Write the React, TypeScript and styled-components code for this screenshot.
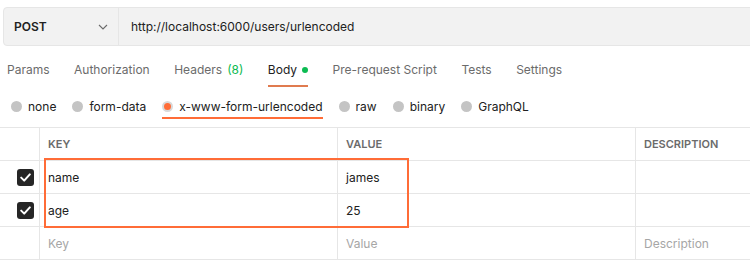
import styled, { createGlobalStyle } from 'styled-components';

const GlobalStyle = createGlobalStyle`
	body {
		margin: 0;
		background: #ffffff;
		font-family: Inter, 'Noto Sans', sans-serif;
		overflow: hidden;
	}
`;

interface Param {
	key: string;
	value: string;
}

const tabs = ['Params', 'Authorization', 'Headers', 'Body', 'Pre-request Script', 'Tests', 'Settings'];
const bodyTypes = ['none', 'form-data', 'x-www-form-urlencoded', 'raw', 'binary', 'GraphQL'];
const params: Param[] = [
	{ key: 'name', value: 'james' },
	{ key: 'age', value: '25' },
];

const Chevron = () => (
	<svg width='10' height='6' viewBox='0 0 10 6' fill='none'>
		<path d='M1 1l4 4 4-4' stroke='#6b6b6b' strokeWidth='1.1' />
	</svg>
);

const Check = () => (
	<svg width='11' height='9' viewBox='0 0 11 9' fill='none'>
		<path d='M1.2 4.6l3 3L9.8 1.4' stroke='#ffffff' strokeWidth='2' strokeLinecap='round' strokeLinejoin='round' />
	</svg>
);

const App: React.FC = () => {
	return (
		<>
			<GlobalStyle />
			<Page>
				<UrlBar>
					<MethodBox>
						<Method>POST</Method>
						<Chevron />
					</MethodBox>
					<UrlText>http://localhost:6000/users/urlencoded</UrlText>
				</UrlBar>

				<TabRow>
					{tabs.map(t => (
						<Tab key={t} active={t === 'Body'}>
							{t}
							{t === 'Headers' && <Count>(8)</Count>}
							{t === 'Body' && <Dot />}
						</Tab>
					))}
				</TabRow>

				<RadioRow>
					{bodyTypes.map(b => (
						<RadioItem key={b} selected={b === 'x-www-form-urlencoded'}>
							<Radio selected={b === 'x-www-form-urlencoded'} />
							{b}
						</RadioItem>
					))}
				</RadioRow>

				<Table>
					<HeadRow>
						<CheckCell />
						<HeadCell>KEY</HeadCell>
						<HeadCell>VALUE</HeadCell>
						<HeadCell last>DESCRIPTION</HeadCell>
					</HeadRow>
					<Highlighted>
						{params.map(p => (
							<Row key={p.key}>
								<CheckCell>
									<CheckBox>
										<Check />
									</CheckBox>
								</CheckCell>
								<Cell>{p.key}</Cell>
								<Cell>{p.value}</Cell>
								<Cell last />
							</Row>
						))}
						<Outline />
					</Highlighted>
					<Row>
						<CheckCell />
						<Cell placeholder>Key</Cell>
						<Cell placeholder>Value</Cell>
						<Cell placeholder last>
							Description
						</Cell>
					</Row>
				</Table>
			</Page>
		</>
	);
};

//Styled Component
const Page = styled.div`
	width: 750px;
	height: 264px;
	overflow: hidden;
`;

const UrlBar = styled.div`
	display: flex;
	height: 37px;
	margin: 7px 0 0 3px;
	width: 760px;
	background: #f2f2f2;
	border: 1px solid #e6e6e6;
	border-radius: 4px;
`;

const MethodBox = styled.div`
	width: 115px;
	box-sizing: border-box;
	display: flex;
	align-items: center;
	justify-content: space-between;
	padding: 0 10px 0 10px;
	border-right: 1px solid #e6e6e6;
	svg {
		margin-top: 1px;
	}
`;

const Method = styled.span`
	font-size: 12px;
	font-weight: 600;
	color: #212121;
`;

const UrlText = styled.div`
	display: flex;
	align-items: center;
	padding-left: 12px;
	font-size: 12px;
	color: #212121;
`;

const TabRow = styled.div`
	display: flex;
	gap: 24.5px;
	padding: 0 0 0 7px;
	height: 41px;
`;

const Tab = styled.div<{ active?: boolean }>`
	display: flex;
	align-items: center;
	padding-top: 8px;
	font-size: 12px;
	color: ${p => (p.active ? '#212121' : '#6b6b6b')};
	border-bottom: 2px solid ${p => (p.active ? '#e07b4f' : 'transparent')};
	box-sizing: border-box;
	height: 41px;
`;

const Count = styled.span`
	color: #0cbb52;
	margin-left: 5px;
`;

const Dot = styled.span`
	width: 6px;
	height: 6px;
	border-radius: 50%;
	background: #0cbb52;
	margin-left: 5px;
	margin-top: 1px;
`;

const RadioRow = styled.div`
	display: flex;
	gap: 16px;
	padding-left: 11px;
	height: 40px;
`;

const RadioItem = styled.div<{ selected?: boolean }>`
	display: flex;
	align-items: center;
	gap: 6px;
	height: 32px;
	padding-top: 8px;
	box-sizing: border-box;
	font-size: 12px;
	color: #212121;
	border-bottom: 2px solid ${p => (p.selected ? '#ff6c37' : 'transparent')};
`;

const Radio = styled.span<{ selected?: boolean }>`
	width: 11px;
	height: 11px;
	border-radius: 50%;
	box-sizing: border-box;
	background: ${p => (p.selected ? '#ff6c37' : '#c4c4c4')};
	border: ${p => (p.selected ? '2px solid #d9d9d9' : 'none')};
`;

const Table = styled.div`
	border-top: 1px solid #e6e6e6;
	display: flex;
	flex-direction: column;
`;

const HeadRow = styled.div`
	display: grid;
	grid-template-columns: 40px 298px 298px 1fr;
	height: 33px;
	box-sizing: border-box;
	border-bottom: 1px solid #e6e6e6;
`;

const Row = styled(HeadRow)``;

const Highlighted = styled.div`
	position: relative;
`;

const Outline = styled.div`
	position: absolute;
	left: 44px;
	top: -3px;
	width: 361px;
	height: 66px;
	border: 2px solid #ff6c37;
	pointer-events: none;
`;

const CheckCell = styled.div`
	border-right: 1px solid #e6e6e6;
	display: flex;
	align-items: center;
	justify-content: flex-end;
	padding-right: 5px;
`;

const HeadCell = styled.div<{ last?: boolean }>`
	display: flex;
	align-items: center;
	padding-left: 8px;
	font-size: 11px;
	font-weight: 600;
	color: #6b6b6b;
	border-right: ${p => (p.last ? 'none' : '1px solid #e6e6e6')};
`;

const Cell = styled.div<{ last?: boolean; placeholder?: boolean }>`
	display: flex;
	align-items: center;
	padding-left: 8px;
	font-size: 12px;
	color: ${p => (p.placeholder ? '#a6a6a6' : '#212121')};
	border-right: ${p => (p.last ? 'none' : '1px solid #e6e6e6')};
`;

const CheckBox = styled.span`
	width: 17px;
	height: 17px;
	border-radius: 3px;
	background: #262626;
	display: flex;
	align-items: center;
	justify-content: center;
`;

export default App;
